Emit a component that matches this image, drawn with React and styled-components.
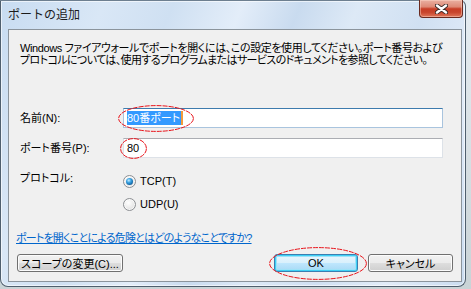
import React from 'react'
import styled, { createGlobalStyle } from 'styled-components'

const GlobalStyle = createGlobalStyle`
  html, body {
    margin: 0;
    padding: 0;
  }
  body {
    font-family: "Liberation Sans", "Noto Sans CJK JP", sans-serif;
    font-size: 11px;
    color: #000;
    font-feature-settings: "palt";
  }
`

function App() {
  return (
    <Desk>
      <GlobalStyle />
      <Window>
        <TitleBar>
          <Title>ポートの追加</Title>
          <CloseButton aria-label="閉じる">
            <svg width="13" height="10" viewBox="0 0 13 10">
              <path d="M2 1.5 L11 8.5 M11 1.5 L2 8.5" stroke="#3a2a28" strokeWidth="4.2" strokeLinecap="round" />
              <path d="M2 1.5 L11 8.5 M11 1.5 L2 8.5" stroke="#ffffff" strokeWidth="2.4" strokeLinecap="round" />
            </svg>
          </CloseButton>
        </TitleBar>

        <Panel>
          <Description>
            <Line $ls={-0.4}>Windows ファイアウォールでポートを開くには、この設定を使用してください。ポート番号および</Line>
            <Line $ls={-0.62}>プロトコルについては、使用するプログラムまたはサービスのドキュメントを参照してください。</Line>
          </Description>

          <FieldRow $top={42}>
            <Label>名前(N):</Label>
            <TextBox $focused>
              <Selected>80番ポート</Selected>
              <Caret />
              <Mark $l={-6.5} $t={-4} $w={76} $h={27} />
            </TextBox>
          </FieldRow>

          <FieldRow $top={10}>
            <Label>ポート番号(P):</Label>
            <TextBox>
              80
              <Mark $l={-4} $t={-1} $w={27} $h={21} />
            </TextBox>
          </FieldRow>

          <ProtocolRow>
            <Label>プロトコル:</Label>
            <RadioGroup>
              <RadioItem>
                <Radio $checked />
                TCP(T)
              </RadioItem>
              <RadioItem>
                <Radio />
                UDP(U)
              </RadioItem>
            </RadioGroup>
          </ProtocolRow>

          <HelpLink href="#">ポートを開くことによる危険とはどのようなことですか?</HelpLink>

          <ButtonRow>
            <Button $w={106}>スコープの変更(C)...</Button>
            <Spacer />
            <Button $w={84} $primary>
              OK
              <Mark $l={-6} $t={-8} $w={98} $h={33} />
            </Button>
            <Button $w={85}>キャンセル</Button>
          </ButtonRow>
        </Panel>
      </Window>
    </Desk>
  )
}

function Mark(props) {
  return (
    <MarkBox {...props}>
      <svg width="100%" height="100%" viewBox={`0 0 ${props.$w} ${props.$h}`}>
        <ellipse
          cx={props.$w / 2}
          cy={props.$h / 2}
          rx={props.$w / 2 - 0.6}
          ry={props.$h / 2 - 0.6}
          fill="none"
          stroke="#e8141b"
          strokeWidth="1"
          strokeDasharray="5 1"
        />
      </svg>
    </MarkBox>
  )
}

export default App

const Desk = styled.div`
  width: 471px;
  height: 289px;
  overflow: hidden;
  background: linear-gradient(180deg, #e6edf2 0%, #c9d3d6 100%);
`

const Window = styled.div`
  width: 464px;
  height: 285px;
  border: 1px solid #4f5f6e;
  border-top-color: #6d7f90;
  border-radius: 0 6px 8px 8px;
  display: flex;
  flex-direction: column;
  background:
    linear-gradient(112deg,
      #c8dcf1 0%, #d9e7f6 18%, #cfe0f2 30%, #e3edf9 42%,
      #c9dbef 52%, #dde9f6 62%, #d0e0f2 74%, #e2ecf8 86%, #cadcf0 100%);
  box-shadow: inset 0 0 0 1px rgba(255, 255, 255, 0.6);
`

const TitleBar = styled.div`
  height: 28px;
  flex: none;
  display: flex;
  justify-content: space-between;
  align-items: flex-start;
  padding: 0 2px 0 7px;
`

const Title = styled.div`
  padding-top: 6px;
  font-size: 12px;
  line-height: 16px;
  font-feature-settings: normal;
  color: #1b1b1b;
`

const CloseButton = styled.div`
  margin-top: -1px;
  width: 42px;
  height: 17px;
  border: 1px solid #6a2a1f;
  border-top: none;
  border-radius: 0 0 4px 4px;
  display: flex;
  align-items: center;
  justify-content: center;
  background: linear-gradient(180deg,
    #eab0a2 0%, #de8a76 40%, #c83e26 52%, #c8452c 72%, #e0765a 100%);
  box-shadow: inset 0 0 0 1px rgba(255, 220, 205, 0.45);
`

const Panel = styled.div`
  flex: 1;
  margin: 0 3px 4px 7px;
  border: 1px solid #8b949c;
  background: #f0f0f0;
  padding: 0 8px 0 7px;
  display: flex;
  flex-direction: column;
`

const Description = styled.div`
  margin: 12px 0 0 4px;
  display: flex;
  flex-direction: column;
`

const Line = styled.div`
  line-height: 12px;
  letter-spacing: ${p => p.$ls}px;
  white-space: nowrap;
`

const FieldRow = styled.div`
  margin: ${p => p.$top}px 0 0 4px;
  display: flex;
  align-items: center;
`

const Label = styled.div`
  width: 103px;
  flex: none;
  line-height: 12px;
  white-space: nowrap;
`

const TextBox = styled.div`
  position: relative;
  width: 315px;
  height: 18px;
  border: 1px solid ${p => (p.$focused ? '#a9c4de' : '#dde2e8')};
  border-top-color: ${p => (p.$focused ? '#3d7bad' : '#abadb3')};
  background: #fff;
  display: flex;
  align-items: center;
  padding-left: 3px;
`

const Selected = styled.span`
  background: #3399ff;
  color: #fff;
  line-height: 14px;
  padding: 0 1px 0 0;
`

const Caret = styled.span`
  width: 2px;
  height: 14px;
  background: #f39a3a;
`

const MarkBox = styled.span`
  position: absolute;
  left: ${p => p.$l}px;
  top: ${p => p.$t}px;
  width: ${p => p.$w}px;
  height: ${p => p.$h}px;
  pointer-events: none;
  svg {
    display: block;
  }
`

const ProtocolRow = styled.div`
  margin: 14px 0 0 4px;
  display: flex;
  align-items: flex-start;
`

const RadioGroup = styled.div`
  margin-top: 1px;
  display: flex;
  flex-direction: column;
  gap: 7px;
`

const RadioItem = styled.label`
  display: flex;
  align-items: center;
  gap: 4px;
  height: 16px;
  line-height: 16px;
`

const Radio = styled.span`
  width: 11px;
  height: 11px;
  border-radius: 50%;
  border: 1px solid #8c8f93;
  position: relative;
  background: radial-gradient(circle at 40% 35%, #ffffff 0%, #e9e9e9 55%, #cfd0d2 100%);
  box-shadow: inset 0 0 0 1px rgba(255, 255, 255, 0.7);
  &::after {
    content: '';
    position: absolute;
    left: 2px;
    top: 2px;
    width: 7px;
    height: 7px;
    border-radius: 50%;
    display: ${p => (p.$checked ? 'block' : 'none')};
    background: radial-gradient(circle at 40% 35%, #c6ecff 0%, #3aa3e2 35%, #0e5f9e 75%, #163f6b 100%);
  }
`

const HelpLink = styled.a`
  margin-top: 20px;
  line-height: 12px;
  letter-spacing: -0.8px;
  color: #0066cc;
  text-decoration: underline;
  white-space: nowrap;
  align-self: flex-start;
`

const ButtonRow = styled.div`
  margin: 10px 0 0 1px;
  display: flex;
  gap: 10px;
`

const Spacer = styled.div`
  flex: 1;
`

const Button = styled.div`
  position: relative;
  width: ${p => p.$w}px;
  height: 18px;
  box-sizing: border-box;
  border-radius: 3px;
  border: 1px solid ${p => (p.$primary ? '#3c7fb1' : '#707070')};
  display: flex;
  align-items: center;
  justify-content: center;
  white-space: nowrap;
  background: ${p =>
    p.$primary
      ? 'linear-gradient(180deg, #eaf6fd 0%, #d9f0fc 48%, #bee6fd 52%, #a7d9f5 100%)'
      : 'linear-gradient(180deg, #f2f2f2 0%, #ebebeb 48%, #dddddd 52%, #cfcfcf 100%)'};
  box-shadow: ${p =>
    p.$primary ? 'inset 0 0 0 1px #3fd0f5, inset 0 0 0 2px #9fe2f8' : 'inset 0 0 0 1px #fcfcfc'};
`
